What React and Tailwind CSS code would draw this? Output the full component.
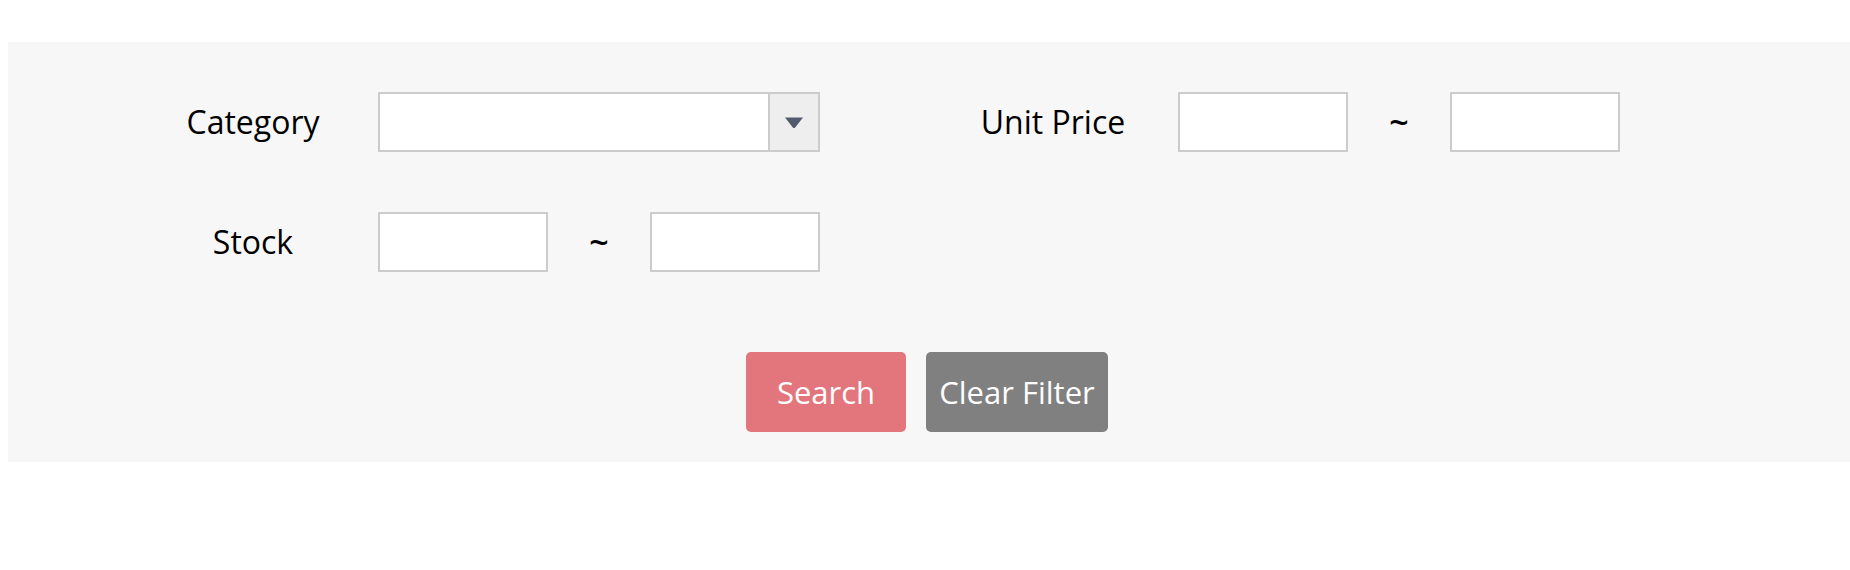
import React from 'react';

const Label = ({ children }) => (
  <label className="w-[250px] text-center text-[32px] leading-none text-black">{children}</label>
);

const TextBox = () => (
  <input type="text" className="h-[60px] w-[170px] border-2 border-[#cccccc] bg-white px-2 outline-none" />
);

const Range = () => (
  <div className="flex w-[442px] items-center justify-between">
    <TextBox />
    <span className="text-[34px] leading-none font-semibold text-black">~</span>
    <TextBox />
  </div>
);

const Dropdown = () => (
  <div className="flex h-[60px] w-[442px] border-2 border-[#cccccc] bg-white">
    <div className="flex-1" />
    <button className="flex w-[50px] items-center justify-center border-l-2 border-[#cccccc] bg-[#eeeeee]">
      <svg width="20" height="13" viewBox="0 0 20 13">
        <path d="M1 1.5 H19 L11.2 11.4 Q10 12.6 8.8 11.4 Z" fill="#525a6d" />
      </svg>
    </button>
  </div>
);

const App = () => {
  return (
    <div className="min-h-[570px] bg-white pl-2 pt-[42px] font-['Open_Sans',sans-serif]">
      <div className="bg-[#f7f7f7] pb-[30px] pt-[50px]">
        <div className="grid grid-cols-[800px_800px] gap-y-[60px] pl-[120px]">
          <div className="flex items-center">
            <Label>Category</Label>
            <Dropdown />
          </div>
          <div className="flex items-center">
            <Label>Unit Price</Label>
            <Range />
          </div>
          <div className="flex items-center">
            <Label>Stock</Label>
            <Range />
          </div>
        </div>

        <div className="mt-20 flex justify-center gap-5 pr-1">
          <button className="h-20 w-[160px] rounded-[5px] bg-[#e2767c] text-[31px] text-white">
            Search
          </button>
          <button className="h-20 w-[182px] rounded-[5px] bg-[#808080] text-[31px] text-white">
            Clear Filter
          </button>
        </div>
      </div>
    </div>
  );
};

export default App;
